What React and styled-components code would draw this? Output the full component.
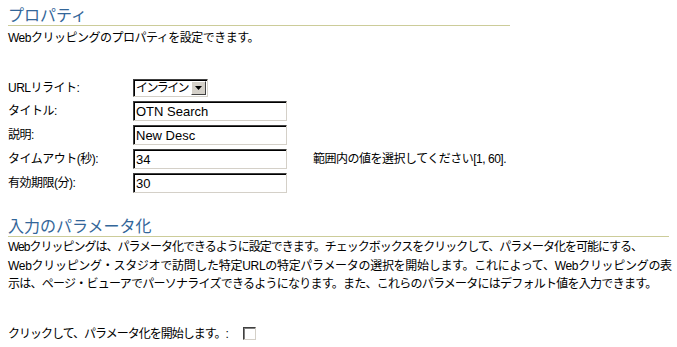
import React from 'react'
import styled, { createGlobalStyle } from 'styled-components'

const GlobalStyle = createGlobalStyle`
    html, body {
        margin:0;
        padding:0;
        background:#fff;
    }
    body {
        font-family:"Liberation Sans", "Noto Sans CJK JP", sans-serif;
        font-size:12px;
        letter-spacing:-0.5px;
        color:#000;
    }
`

const fields = [
    { label: 'タイトル:', value: 'OTN Search' },
    { label: '説明:', value: 'New Desc' },
    { label: 'タイムアウト(秒):', value: '34', hint: '範囲内の値を選択してください[1, 60].' },
    { label: '有効期限(分):', value: '30' },
]

// lines broken where the reference breaks them
const paramLines = [
    { text: 'Webクリッピングは、パラメータ化できるように設定できます。チェックボックスをクリックして、パラメータ化を可能にする、', spacing: -1 },
    { text: 'Webクリッピング・スタジオで訪問した特定URLの特定パラメータの選択を開始します。これによって、Webクリッピングの表', spacing: -0.3 },
    { text: '示は、ページ・ビューアでパーソナライズできるようになります。また、これらのパラメータにはデフォルト値を入力できます。', spacing: -0.75 },
]

function App() {
    return (
        <Page>
            <GlobalStyle />
            <Section>
                <Heading width={502}>プロパティ</Heading>
                <Text>Webクリッピングのプロパティを設定できます。</Text>
            </Section>

            <Form>
                <Label>URLリライト:</Label>
                <Select>
                    <span>インライン</span>
                    <ArrowButton>
                        <svg width="7" height="4" viewBox="0 0 7 4">
                            <path d="M0 0h7L3.5 4z" fill="#000" />
                        </svg>
                    </ArrowButton>
                </Select>
                <span />
                {fields.map((f) => (
                    <React.Fragment key={f.label}>
                        <Label>{f.label}</Label>
                        <Input>{f.value}</Input>
                        <Hint>{f.hint}</Hint>
                    </React.Fragment>
                ))}
            </Form>

            <Section top={23}>
                <Heading width={661}>入力のパラメータ化</Heading>
                <Paragraph>
                    {paramLines.map((l) => (
                        <Line key={l.text} spacing={l.spacing}>{l.text}</Line>
                    ))}
                </Paragraph>
            </Section>

            <CheckRow>
                <span>クリックして、パラメータ化を開始します。:</span>
                <Checkbox />
            </CheckRow>
        </Page>
    )
}

export default App

const Page = styled.div`
    width:677px;
    height:347px;
    padding:5px 8px 0;
    box-sizing:border-box;
    overflow:hidden;
`

const Section = styled.div`
    margin-top:${(p) => p.top || 0}px;
`

const Heading = styled.h2`
    margin:0;
    width:${(p) => p.width}px;
    font-family:"Noto Sans CJK JP", sans-serif;
    font-size:16px;
    font-weight:normal;
    letter-spacing:0;
    line-height:19px;
    color:#336699;
    padding-bottom:1px;
    border-bottom:1px solid #cccc99;
`

const Text = styled.div`
    margin-top:5px;
    line-height:15px;
`

const Paragraph = styled.div`
    margin-top:1px;
`

const Line = styled.div`
    white-space:nowrap;
    line-height:18.5px;
    letter-spacing:${(p) => p.spacing}px;
`

const Form = styled.div`
    margin-top:33px;
    display:grid;
    grid-template-columns:125px 154px auto;
    grid-template-rows:18px;
    grid-auto-rows:20px;
    row-gap:4px;
    align-items:center;
`

const Label = styled.div`
    line-height:14px;
    white-space:nowrap;
`

const Select = styled.div`
    width:75px;
    height:18px;
    box-sizing:border-box;
    display:flex;
    align-items:center;
    justify-content:space-between;
    border:1px solid;
    border-color:#404040 #d4d0c8 #d4d0c8 #404040;
    box-shadow:inset 1px 1px 0 #000;
    padding:0 1px 0 2px;
    background:#fff;
    line-height:14px;
    letter-spacing:-1.6px;
    white-space:nowrap;
    overflow:hidden;
`

const ArrowButton = styled.div`
    width:15px;
    height:14px;
    flex-shrink:0;
    box-sizing:border-box;
    display:flex;
    align-items:center;
    justify-content:center;
    background:#d4d0c8;
    border:1px solid;
    border-color:#fff #404040 #404040 #fff;
`

const Input = styled.div`
    width:154px;
    height:20px;
    box-sizing:border-box;
    border:1px solid;
    border-color:#404040 #d4d0c8 #d4d0c8 #404040;
    box-shadow:inset 1px 1px 0 #000;
    padding:1px 2px 0;
    font-family:"Liberation Sans", sans-serif;
    font-size:13px;
    letter-spacing:0;
    line-height:17px;
    background:#fff;
`

const Hint = styled.div`
    margin-left:26px;
    line-height:14px;
    white-space:nowrap;
`

const CheckRow = styled.div`
    margin-top:33px;
    display:flex;
    align-items:center;
    gap:15px;
    line-height:14px;
    letter-spacing:-1px;
`

const Checkbox = styled.div`
    width:13px;
    height:13px;
    box-sizing:border-box;
    border:1px solid;
    border-color:#404040 #d4d0c8 #d4d0c8 #404040;
    box-shadow:inset 1px 1px 0 #808080;
    background:#fff;
`
